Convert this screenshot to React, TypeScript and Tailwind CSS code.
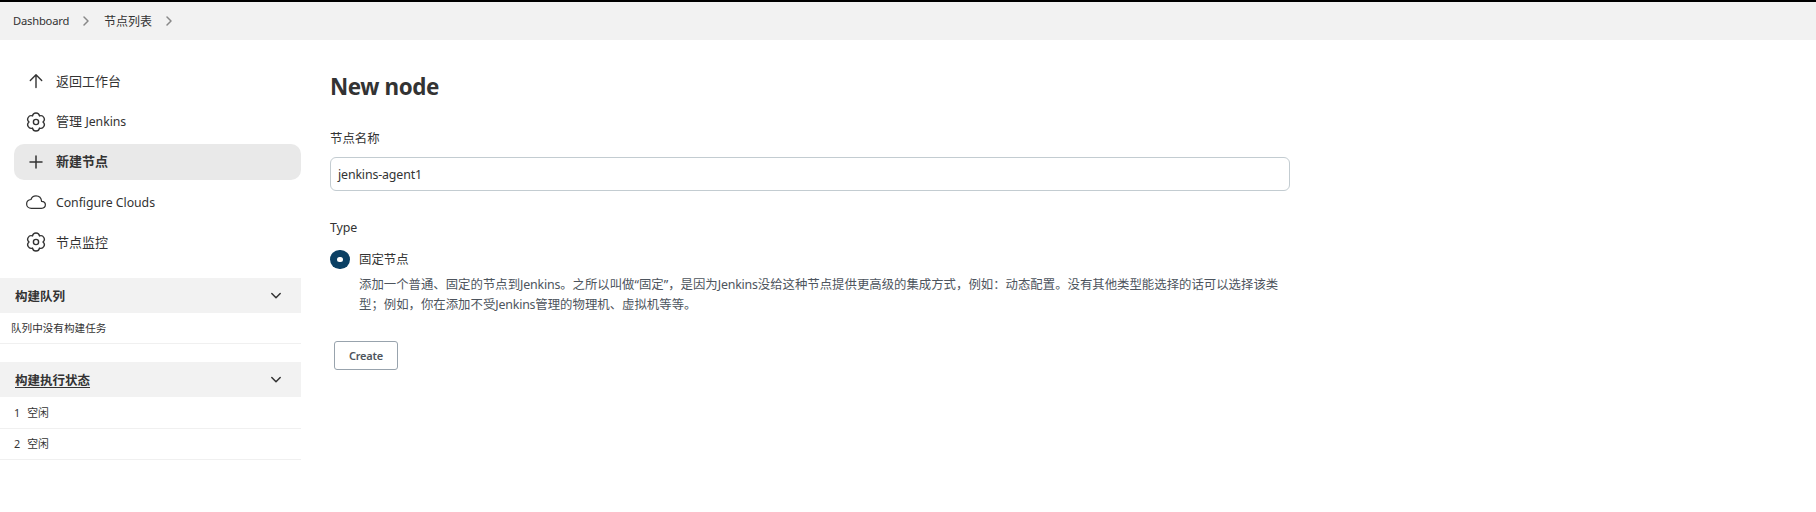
import type { ReactNode } from "react";
import { IoCloudOutline } from "react-icons/io5";

function Chevron({ down = false, className = "" }: { down?: boolean; className?: string }) {
  return (
    <svg viewBox="0 0 12 12" className={`h-3 w-3 shrink-0 ${className}`} fill="none" stroke="currentColor" strokeWidth="1.5" strokeLinecap="round" strokeLinejoin="round">
      <path d={down ? "M1.8 3.5 6 7.7 10.2 3.5" : "M4 2 8 6 4 10"} />
    </svg>
  );
}

function Arrow() {
  return (
    <svg viewBox="0 0 20 20" className="h-5 w-5" fill="none" stroke="currentColor" strokeWidth="1.4" strokeLinecap="round" strokeLinejoin="round">
      <path d="M4.3 8.4 10 2.7 15.7 8.4M10 3V15.6" />
    </svg>
  );
}

function Plus() {
  return (
    <svg viewBox="0 0 20 20" className="h-5 w-5" fill="none" stroke="currentColor" strokeWidth="1.5" strokeLinecap="round">
      <path d="M10 4v12M4 10h12" />
    </svg>
  );
}

function Gear() {
  return (
    <svg viewBox="-10 -10 20 20" className="h-5 w-5" fill="none" stroke="currentColor" strokeWidth="1.4" strokeLinejoin="round">
      <path d="M7 0A3.55 3.55 0 0 1 3.5 6.06A3.55 3.55 0 0 1 -3.5 6.06A3.55 3.55 0 0 1 -7 0A3.55 3.55 0 0 1 -3.5 -6.06A3.55 3.55 0 0 1 3.5 -6.06A3.55 3.55 0 0 1 7 0Z" />
      <circle r="2.6" />
    </svg>
  );
}

function Task({ icon, active = false, children }: { icon: ReactNode; active?: boolean; children: ReactNode }) {
  return (
    <a className={`flex h-9 items-center gap-[10px] rounded-[10px] pl-3 text-[13px] whitespace-nowrap ${active ? "bg-[#e9e9e9] font-bold" : ""}`}>
      <span className="flex w-5 justify-center">{icon}</span>
      <span>{children}</span>
    </a>
  );
}

function PaneHeader({ children }: { children: ReactNode }) {
  return (
    <div className="flex h-[35px] items-center justify-between bg-[#f2f2f2] pr-[19px] pl-[15px] text-[12.5px] font-bold">
      <span className="pt-[3px]">{children}</span>
      <Chevron down />
    </div>
  );
}

function Latin({ children }: { children: ReactNode }) {
  return <span className="text-[12.3px] tracking-[-0.05px]">{children}</span>;
}

export default function App() {
  return (
    <div className="h-[512px] bg-white font-['Noto_Sans','Noto_Sans_CJK_SC',sans-serif] text-[#333]">
      <div className="flex h-10 items-center border-t-2 border-black bg-[#f2f2f2] pl-[13px] text-[12px] whitespace-nowrap">
        <span className="w-[56px] pt-px text-[11.2px] tracking-[-0.2px]">Dashboard</span>
        <Chevron className="ml-[11px] text-[#888]" />
        <span className="ml-3 w-12 pt-px">节点列表</span>
        <Chevron className="ml-[11px] text-[#888]" />
      </div>
      <div className="flex">
        <aside className="w-[301px] pt-6">
          <nav className="flex flex-col gap-1 pl-[14px]">
            <Task icon={<Arrow />}>返回工作台</Task>
            <Task icon={<Gear />}>管理 <Latin>Jenkins</Latin></Task>
            <Task icon={<Plus />} active>新建节点</Task>
            <Task icon={<IoCloudOutline size={20} />}><span className="block pt-[2px]"><Latin>Configure Clouds</Latin></span></Task>
            <Task icon={<Gear />}><span className="block pt-px">节点监控</span></Task>
          </nav>
          <section className="mt-[18px]">
            <PaneHeader>构建队列</PaneHeader>
            <div className="flex h-[31px] items-center border-b border-[#f0f0f0] pt-px pl-[11px] text-[10.6px]">队列中没有构建任务</div>
          </section>
          <section className="mt-[18px]">
            <PaneHeader><span className="underline underline-offset-2">构建执行状态</span></PaneHeader>
            <div className="flex h-8 items-center gap-[7px] border-b border-[#f0f0f0] pt-px pl-[14px] text-[10.8px]"><span>1</span><span>空闲</span></div>
            <div className="flex h-[31px] items-center gap-[7px] border-b border-[#f0f0f0] pl-[14px] text-[10.8px]"><span>2</span><span>空闲</span></div>
          </section>
        </aside>
        <main className="ml-[29px] w-[960px] pt-8 text-[12.4px]">
          <h1 className="h-[30px] text-[22.4px] leading-[30px] font-bold tracking-[-0.4px]">New node</h1>
          <div className="mt-[27px] h-5 leading-5">节点名称</div>
          <div className="mt-2 flex h-[34px] items-center rounded-[6px] border border-[#c3ccd1] px-[7px] pt-[3px] tracking-[-0.15px]">jenkins-agent1</div>
          <div className="mt-[27px] h-5 leading-5 tracking-[-0.1px]">Type</div>
          <div className="mt-3 flex h-[19px] items-center gap-[9px]">
            <span className="flex h-[19px] w-5 items-center justify-center rounded-full bg-[#0b4064]"><span className="h-[5px] w-[6px] rounded-full bg-white" /></span>
            <span className="pt-px">固定节点</span>
          </div>
          <div className="mt-[6px] pl-[29px] leading-5 whitespace-nowrap text-[#4d545d]">
            <div>添加一个普通、固定的节点到<span className="tracking-[-0.2px]">Jenkins</span>。之所以叫做“固定”，是因为<span className="tracking-[-0.2px]">Jenkins</span>没给这种节点提供更高级的集成方式，例如：动态配置。没有其他类型能选择的话可以选择该类</div>
            <div>型；例如，你在添加不受<span className="tracking-[-0.2px]">Jenkins</span>管理的物理机、虚拟机等等。</div>
          </div>
          <button className="mt-[26px] ml-1 flex h-[29px] w-16 items-center justify-center rounded-[3px] border border-[#98a3ad] pt-px text-[11px] font-semibold tracking-[-0.2px] text-[#4d545d]">Create</button>
        </main>
      </div>
    </div>
  );
}
